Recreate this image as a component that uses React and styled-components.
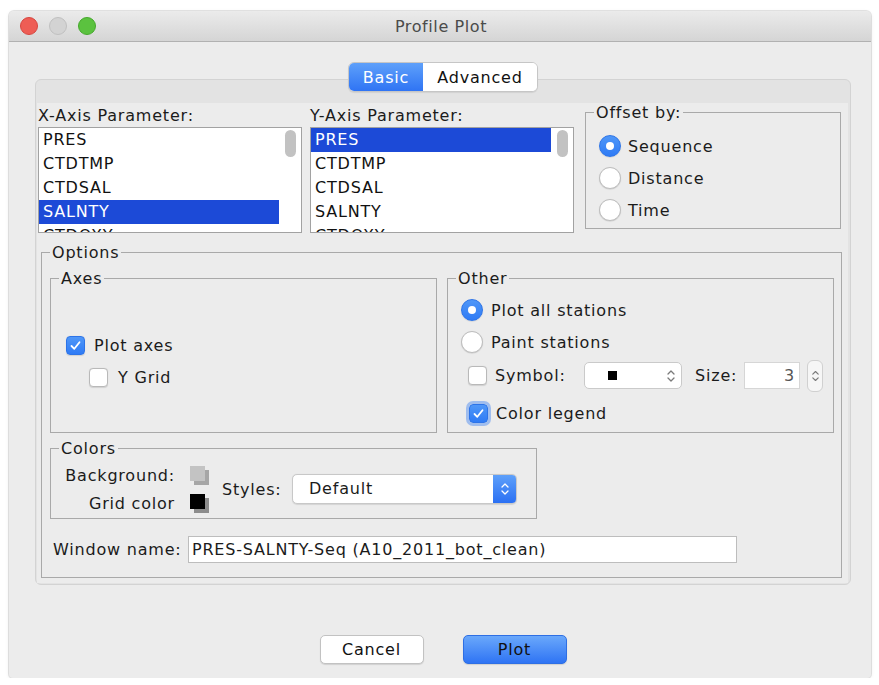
import React from 'react';
import styled, { createGlobalStyle } from 'styled-components';

const FONT = `"DejaVu Sans", "Lucida Grande", Verdana, sans-serif`;

const GlobalStyle = createGlobalStyle`
    body {
        margin: 0;
        background: #ffffff;
        font-family: ${FONT};
        font-size: 16px;
        letter-spacing: 0.8px;
        color: #1b1b1b;
    }
`;

const xParams = ['PRES', 'CTDTMP', 'CTDSAL', 'SALNTY', 'CTDOXY'];

// 작은 위/아래 화살표 (콤보박스, 스피너)
const Chevrons = ({ color = '#7a7a7a', w = 10, h = 16 }) => (
    <svg width={w} height={h} viewBox="0 0 10 16" fill="none">
        <path d="M2 6 L5 3 L8 6" stroke={color} strokeWidth="1.3" strokeLinecap="round" strokeLinejoin="round" />
        <path d="M2 10 L5 13 L8 10" stroke={color} strokeWidth="1.3" strokeLinecap="round" strokeLinejoin="round" />
    </svg>
);

const Check = ({ checked, glow }) => (
    <CheckBox $checked={checked} $glow={glow}>
        {checked && (
            <svg width="13" height="13" viewBox="0 0 13 13" fill="none">
                <path d="M2.5 7 L5.3 9.8 L10.5 3.2" stroke="#fff" strokeWidth="1.8" strokeLinecap="round" strokeLinejoin="round" />
            </svg>
        )}
    </CheckBox>
);

const App = () => {
    return (
        <>
            <GlobalStyle />
            <Page>
                <Window>
                    <TitleBar>
                        <Lights>
                            <Light $bg="#ee5d55" $border="#d7463f" />
                            <Light $bg="#d3d3d3" $border="#c0c0c0" />
                            <Light $bg="#5bc23f" $border="#45a92c" />
                        </Lights>
                        <Title>Profile Plot</Title>
                        <span />
                    </TitleBar>

                    <Body>
                        <TabRow>
                            <Segmented>
                                <Seg $active>Basic</Seg>
                                <Seg>Advanced</Seg>
                            </Segmented>
                        </TabRow>

                        <TabPanel>
                            <Content>
                                <TopRow>
                                    <ParamCol $gap={8}>
                                        <ParamLabel>X-Axis Parameter:</ParamLabel>
                                        <ListBox>
                                            <ListItems>
                                                {xParams.map(p => (
                                                    <ListRow key={p} $selected={p === 'SALNTY'}>{p}</ListRow>
                                                ))}
                                            </ListItems>
                                            <ScrollLane><Thumb /></ScrollLane>
                                        </ListBox>
                                    </ParamCol>
                                    <ParamCol $gap={11}>
                                        <ParamLabel>Y-Axis Parameter:</ParamLabel>
                                        <ListBox>
                                            <ListItems>
                                                {xParams.map(p => (
                                                    <ListRow key={p} $selected={p === 'PRES'}>{p}</ListRow>
                                                ))}
                                            </ListItems>
                                            <ScrollLane><Thumb /></ScrollLane>
                                        </ListBox>
                                    </ParamCol>
                                    <OffsetGroup>
                                        <Legend>Offset by:</Legend>
                                        <RadioRow><Radio $on /><span>Sequence</span></RadioRow>
                                        <RadioRow><Radio /><span>Distance</span></RadioRow>
                                        <RadioRow><Radio /><span>Time</span></RadioRow>
                                    </OffsetGroup>
                                </TopRow>

                                <OptionsGroup>
                                    <Legend $ml={0}>Options</Legend>
                                    <GroupRow>
                                        <AxesGroup>
                                            <Legend>Axes</Legend>
                                            <CheckRow $indent={15}><Check checked /><span>Plot axes</span></CheckRow>
                                            <CheckRow $indent={38} $gap={10}><Check /><span>Y Grid</span></CheckRow>
                                        </AxesGroup>
                                        <OtherGroup>
                                            <Legend>Other</Legend>
                                            <OtherRadio><Radio $on /><span>Plot all stations</span></OtherRadio>
                                            <OtherRadio><Radio /><span>Paint stations</span></OtherRadio>
                                            <SymbolRow>
                                                <Check />
                                                <SymbolLabel>Symbol:</SymbolLabel>
                                                <SymbolCombo>
                                                    <SymbolSquare />
                                                    <Chevrons />
                                                </SymbolCombo>
                                                <SizeLabel>Size:</SizeLabel>
                                                <SizeField>3</SizeField>
                                                <Spinner><Chevrons w={9} h={22} /></Spinner>
                                            </SymbolRow>
                                            <LegendRow><Check checked glow /><span>Color legend</span></LegendRow>
                                        </OtherGroup>
                                    </GroupRow>

                                    <ColorsGroup>
                                        <Legend>Colors</Legend>
                                        <ColorGrid>
                                            <ColorLabel>Background:</ColorLabel>
                                            <Swatch $front="#c3c3c3" $back="#a6a6a6" />
                                            <ColorLabel>Grid color</ColorLabel>
                                            <Swatch $front="#000000" $back="#8c8c8c" />
                                        </ColorGrid>
                                        <StylesLabel>Styles:</StylesLabel>
                                        <StylesCombo>
                                            <StylesValue>Default</StylesValue>
                                            <StylesCap><Chevrons color="#ffffff" /></StylesCap>
                                        </StylesCombo>
                                    </ColorsGroup>

                                    <NameRow>
                                        <NameLabel>Window name:</NameLabel>
                                        <NameField>PRES-SALNTY-Seq (A10_2011_bot_clean)</NameField>
                                    </NameRow>
                                </OptionsGroup>
                            </Content>
                        </TabPanel>

                        <ButtonRow>
                            <Button>Cancel</Button>
                            <Button $primary>Plot</Button>
                        </ButtonRow>
                    </Body>
                </Window>
            </Page>
        </>
    );
};

const Page = styled.div`
    padding: 11px 0 0 9px;
`;

const Window = styled.div`
    width: 862px;
    height: 667px;
    box-sizing: border-box;
    background: #ececec;
    border-radius: 5px 5px 4px 4px;
    box-shadow: 0 0 0 1px rgba(0, 0, 0, 0.1), 0 1px 4px rgba(0, 0, 0, 0.08);
    overflow: hidden;
    display: flex;
    flex-direction: column;
`;

const TitleBar = styled.div`
    height: 30px;
    flex-shrink: 0;
    display: grid;
    grid-template-columns: 1fr auto 1fr;
    align-items: center;
    background: linear-gradient(#ebebeb, #d5d5d5);
    border-bottom: 1px solid #b1b1b1;
`;

const Lights = styled.div`
    display: flex;
    gap: 11px;
    padding-left: 11px;
`;

const Light = styled.span`
    width: 16px;
    height: 16px;
    border-radius: 50%;
    background: ${p => p.$bg};
    border: 0.5px solid ${p => p.$border};
`;

const Title = styled.div`
    font-size: 16px;
    color: #4b4b4b;
    letter-spacing: 0.6px;
    padding-left: 2px;
`;

const Body = styled.div`
    display: flex;
    flex-direction: column;
    padding: 20px 20px 0 26px;
`;

const TabRow = styled.div`
    display: flex;
    justify-content: center;
    position: relative;
    z-index: 1;
`;

const Segmented = styled.div`
    display: flex;
    height: 30px;
    box-sizing: border-box;
    border: 1px solid #c6c6c6;
    border-radius: 6px;
    overflow: hidden;
    background: #ffffff;
    box-shadow: 0 1px 1px rgba(0, 0, 0, 0.08);
`;

const Seg = styled.div`
    display: flex;
    align-items: center;
    justify-content: center;
    width: ${p => (p.$active ? '74px' : '114px')};
    font-size: 16px;
    color: ${p => (p.$active ? '#ffffff' : '#111111')};
    background: ${p => (p.$active ? 'linear-gradient(#5ea0fa, #2f74f4)' : '#ffffff')};
`;

const TabPanel = styled.div`
    margin-top: -13px;
    border: 1px solid #d3d3d3;
    border-radius: 6px;
    background: #e3e3e3;
    padding: 23px 2px 1px 1px;
`;

const Content = styled.div`
    height: 480px;
    background: #ececec;
    display: flex;
    flex-direction: column;
`;

const TopRow = styled.div`
    display: flex;
    align-items: flex-start;
    padding-left: 1px;
`;

const ParamCol = styled.div`
    width: 264px;
    margin-right: ${p => p.$gap}px;
    padding-top: 3px;
`;

const ParamLabel = styled.div`
    height: 19px;
    line-height: 19px;
    margin-bottom: 2px;
`;

const ListBox = styled.div`
    height: 106px;
    box-sizing: border-box;
    border: 1px solid #a2a2a2;
    background: #ffffff;
    display: flex;
    overflow: hidden;
`;

const ListItems = styled.div`
    flex: 1;
`;

const ListRow = styled.div`
    height: 24px;
    line-height: 24px;
    padding-left: 4px;
    color: ${p => (p.$selected ? '#ffffff' : '#111111')};
    background: ${p => (p.$selected ? '#1c4ad7' : 'transparent')};
`;

const ScrollLane = styled.div`
    width: 22px;
    padding: 2px 0 0 6px;
    box-sizing: border-box;
`;

const Thumb = styled.div`
    width: 11px;
    height: 27px;
    border-radius: 6px;
    background: #c2c2c2;
`;

const Fieldset = styled.fieldset`
    margin: 0;
    min-width: 0;
    box-sizing: border-box;
    border: 1px solid #a9a9a9;
    padding: 0;
`;

const Legend = styled.legend`
    padding: 0 2px;
    margin-left: ${p => (p.$ml ?? 8)}px;
    height: 19px;
    line-height: 19px;
    font-size: 16px;
`;

const OffsetGroup = styled(Fieldset)`
    width: 256px;
    padding: 8px 0 2px 0;
`;

const RadioRow = styled.div`
    display: flex;
    align-items: center;
    height: 32px;
    gap: 7px;
    padding-left: 13px;
`;

const Radio = styled.span`
    width: 22px;
    height: 22px;
    box-sizing: border-box;
    border-radius: 50%;
    flex-shrink: 0;
    display: flex;
    align-items: center;
    justify-content: center;
    background: ${p => (p.$on ? 'linear-gradient(#4f97f8, #2f7bf5)' : '#ffffff')};
    border: 1px solid ${p => (p.$on ? '#2d74e8' : '#bdbdbd')};
    box-shadow: 0 0.5px 1px rgba(0, 0, 0, 0.15);

    &::after {
        content: '';
        display: ${p => (p.$on ? 'block' : 'none')};
        width: 8px;
        height: 8px;
        border-radius: 50%;
        background: #ffffff;
    }
`;

const CheckBox = styled.span`
    width: 19px;
    height: 19px;
    box-sizing: border-box;
    border-radius: 4px;
    flex-shrink: 0;
    display: flex;
    align-items: center;
    justify-content: center;
    background: ${p => (p.$checked ? 'linear-gradient(#4f97f8, #2f7bf5)' : '#ffffff')};
    border: 1px solid ${p => (p.$checked ? '#2d74e8' : '#b9b9b9')};
    box-shadow: ${p => (p.$glow ? '0 0 0 3px rgba(96, 152, 240, 0.55)' : '0 0.5px 1px rgba(0, 0, 0, 0.12)')};
`;

const OptionsGroup = styled(Fieldset)`
    margin: 10px 6px 0 4px;
    padding: 7px 7px 14px 8px;
`;

const GroupRow = styled.div`
    display: flex;
    gap: 10px;
`;

const AxesGroup = styled(Fieldset)`
    width: 387px;
    height: 164px;
    padding-top: 41px;
`;

const CheckRow = styled.div`
    display: flex;
    align-items: center;
    height: 32px;
    gap: ${p => p.$gap || 9}px;
    padding-left: ${p => p.$indent}px;
`;

const OtherGroup = styled(Fieldset)`
    width: 387px;
    height: 164px;
    padding-top: 6px;
`;

const OtherRadio = styled(RadioRow)`
    gap: 8px;
`;

const SymbolRow = styled.div`
    display: flex;
    align-items: center;
    height: 35px;
    padding-left: 20px;
`;

const SymbolLabel = styled.span`
    width: 89px;
    margin-left: 8px;
`;

const SymbolCombo = styled.div`
    width: 98px;
    height: 27px;
    box-sizing: border-box;
    border: 1px solid #cacaca;
    border-radius: 5px;
    background: #ffffff;
    display: flex;
    align-items: center;
    justify-content: space-between;
    padding: 0 5px 0 23px;
`;

const SymbolSquare = styled.span`
    width: 9px;
    height: 9px;
    background: #000000;
`;

const SizeLabel = styled.span`
    width: 49px;
    margin-left: 13px;
`;

const SizeField = styled.div`
    width: 56px;
    height: 27px;
    box-sizing: border-box;
    border: 1px solid #d6d6d6;
    background: #ffffff;
    color: #555555;
    text-align: right;
    line-height: 25px;
    padding-right: 4px;
`;

const Spinner = styled.div`
    width: 16px;
    height: 32px;
    margin-left: 7px;
    box-sizing: border-box;
    border: 1px solid #d0d0d0;
    border-radius: 6px;
    background: #f6f6f6;
    display: flex;
    align-items: center;
    justify-content: center;
`;

const LegendRow = styled.div`
    display: flex;
    align-items: center;
    height: 33px;
    margin-top: 4px;
    padding-left: 21px;
    gap: 8px;
`;

const ColorsGroup = styled(Fieldset)`
    width: 487px;
    height: 80.5px;
    margin-top: 5.5px;
    padding-top: 3px;
    display: flex;
    align-items: center;
    align-content: flex-start;
`;

const ColorGrid = styled.div`
    display: grid;
    grid-template-columns: 124px 20px;
    grid-auto-rows: 28px;
    column-gap: 15px;
    align-items: center;
`;

const ColorLabel = styled.span`
    text-align: right;
`;

const Swatch = styled.span`
    width: 15px;
    height: 15px;
    margin-top: -3px;
    background: ${p => p.$front};
    box-shadow: 4px 4px 0 ${p => p.$back};
`;

const StylesLabel = styled.span`
    width: 70px;
    margin-left: 12px;
`;

const StylesCombo = styled.div`
    width: 225px;
    height: 30px;
    box-sizing: border-box;
    border: 1px solid #c8c8c8;
    border-radius: 5px;
    background: #ffffff;
    display: flex;
    overflow: hidden;
    box-shadow: 0 0.5px 1px rgba(0, 0, 0, 0.1);
`;

const StylesValue = styled.span`
    flex: 1;
    line-height: 28px;
    padding-left: 16px;
`;

const StylesCap = styled.span`
    width: 23px;
    display: flex;
    align-items: center;
    justify-content: center;
    background: linear-gradient(#5ea0fa, #2b70f3);
`;

const NameRow = styled.div`
    display: flex;
    align-items: center;
    margin-top: 17px;
    padding-left: 3px;
`;

const NameLabel = styled.span`
    width: 135px;
`;

const NameField = styled.div`
    width: 549px;
    height: 27px;
    box-sizing: border-box;
    border: 1px solid #bdbdbd;
    background: #ffffff;
    line-height: 25px;
    padding-left: 3px;
    white-space: nowrap;
`;

const ButtonRow = styled.div`
    display: flex;
    justify-content: center;
    gap: 39px;
    margin-top: 50px;
`;

const Button = styled.div`
    width: 104px;
    height: 29px;
    box-sizing: border-box;
    border-radius: 5px;
    display: flex;
    align-items: center;
    justify-content: center;
    font-size: 16px;
    color: #111111;
    background: ${p => (p.$primary ? 'linear-gradient(#6aa8fb, #2f74f4)' : '#ffffff')};
    border: 1px solid ${p => (p.$primary ? '#2e6fe4' : '#c2c2c2')};
    box-shadow: 0 1px 1px rgba(0, 0, 0, 0.12);
`;

export default App;
